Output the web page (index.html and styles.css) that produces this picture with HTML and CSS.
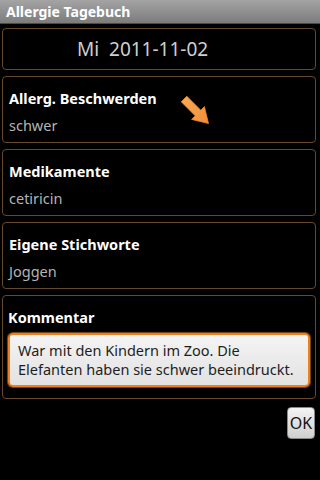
FILE: index.html
```html
<!DOCTYPE html>
<html lang="de">
<head>
<meta charset="utf-8">
<title>Allergie Tagebuch</title>
<link rel="stylesheet" href="styles.css">
</head>
<body>
<div class="screen">
  <header class="titlebar">Allergie Tagebuch</header>
  <main class="list">
    <section class="card card-date">
      <div class="date">Mi&nbsp;&nbsp;2011-11-02</div>
    </section>
    <section class="card card-field card-arrow">
      <div class="label">Allerg. Beschwerden</div>
      <div class="value">schwer</div>
      <svg class="arrow" width="30" height="30" viewBox="0 0 30 30" aria-hidden="true">
        <defs>
          <linearGradient id="ag" x1="0" y1="0" x2="1" y2="1">
            <stop offset="0" stop-color="#f7ab58"/>
            <stop offset="1" stop-color="#f19038"/>
          </linearGradient>
        </defs>
        <path d="M1.2 6.8 L6.8 1.2 L20.8 15.2 L24.4 11.6 L28.5 28.5 L11.6 24.4 L15.2 20.8 Z" fill="url(#ag)" stroke="#e8862c" stroke-width="0.8" stroke-linejoin="round"/>
      </svg>
    </section>
    <section class="card card-field">
      <div class="label">Medikamente</div>
      <div class="value">cetiricin</div>
    </section>
    <section class="card card-field">
      <div class="label">Eigene Stichworte</div>
      <div class="value">Joggen</div>
    </section>
    <section class="card card-comment">
      <div class="label">Kommentar</div>
      <div class="textbox">War mit den Kindern im Zoo. Die Elefanten haben sie schwer beeindruckt.</div>
    </section>
  </main>
  <footer class="actions">
    <button class="ok" type="button">OK</button>
  </footer>
</div>
</body>
</html>
```
FILE: styles.css
```css
html, body {
  margin: 0;
  padding: 0;
  background: #000;
}
body {
  font-family: "Noto Sans", "Open Sans", "DejaVu Sans", sans-serif;
  color: #fff;
}
.screen {
  width: 320px;
  height: 480px;
  background: #000;
  overflow: hidden;
}
.titlebar {
  height: 24px;
  box-sizing: border-box;
  padding-left: 6px;
  background: linear-gradient(#a4a4a4, #7c7c7c);
  border-bottom: 1px solid #4a4a4a;
  font-weight: bold;
  font-size: 14px;
  line-height: 23px;
  color: #fff;
}
.list {
  display: flex;
  flex-direction: column;
  gap: 6px;
  padding: 4px 4px 0 2px;
}
.card {
  box-sizing: border-box;
  border: 1px solid #66482a;
  border-radius: 4px;
  background: #000;
}
.card-date {
  height: 42px;
  padding-left: 74px;
}
.date {
  font-size: 19px;
  line-height: 40px;
  color: #cfcfcf;
}
.card-field {
  height: 67px;
  padding: 11px 6px 0 6px;
}
.card-arrow {
  position: relative;
}
.arrow {
  position: absolute;
  left: 177px;
  top: 18px;
}
.label {
  font-weight: bold;
  font-size: 14.5px;
  line-height: 20px;
  color: #fff;
}
.value {
  margin-top: 7px;
  font-size: 14.5px;
  line-height: 20px;
  color: #b4b4b4;
}
.card-comment {
  height: 104px;
  padding: 11px 5px 0 5px;
}
.textbox {
  margin-top: 6px;
  height: 54px;
  box-sizing: border-box;
  border: 2px solid #f0801e;
  border-radius: 5px;
  background: linear-gradient(#f4f4f4, #e2e2e2);
  box-shadow: 0 0 1px 1px rgba(240, 150, 60, 0.5);
  padding: 6px 8px 0 8px;
  font-size: 14.5px;
  line-height: 19px;
  color: #1e1e1e;
}
.actions {
  display: flex;
  justify-content: flex-end;
  padding: 8px 5px 0 0;
}
.ok {
  width: 28px;
  height: 32px;
  padding: 0;
  border: 1px solid #8a8a8a;
  border-radius: 4px;
  background: linear-gradient(#f4f4f4, #cfcfcf);
  font-family: "Noto Sans", "Open Sans", "DejaVu Sans", sans-serif;
  font-size: 16px;
  color: #111;
}
```
